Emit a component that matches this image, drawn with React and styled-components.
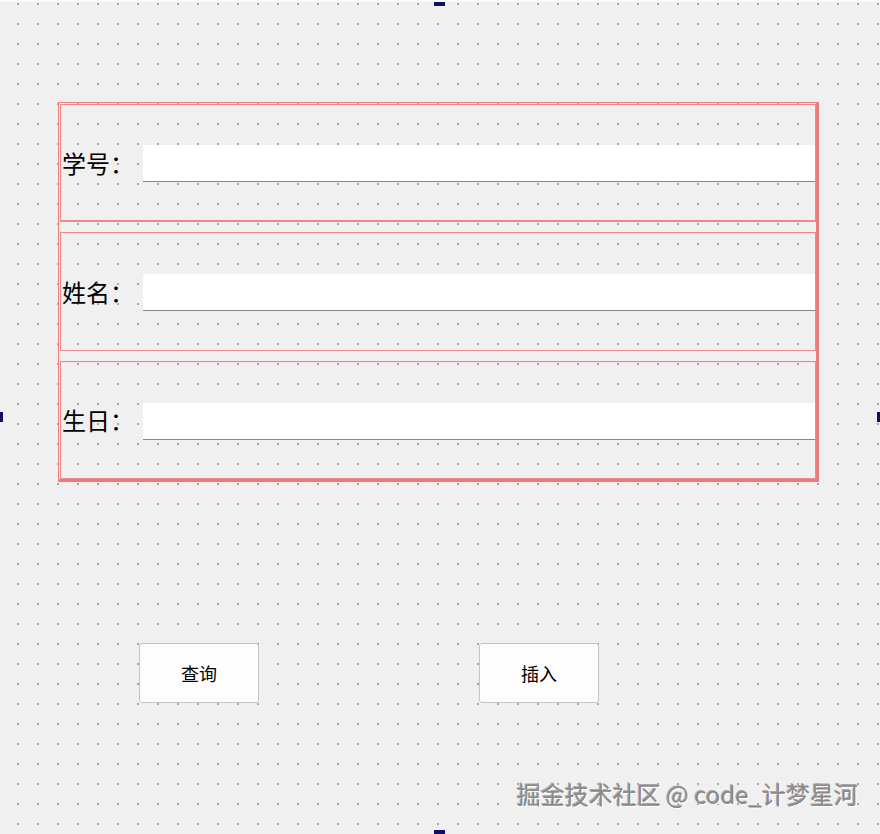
import React from 'react';
import styled, { createGlobalStyle } from 'styled-components';

const GlobalStyle = createGlobalStyle`
  html, body {
    margin: 0;
    padding: 0;
    background: #f0f0f0;
  }
  body {
    font-family: "Noto Sans CJK SC", "Noto Sans", sans-serif;
  }
`;

const Canvas = styled.div`
  position: relative;
  width: 880px;
  height: 834px;
  box-sizing: border-box;
  overflow: hidden;
  background-color: #f0f0f0;
  background-image: conic-gradient(at 2px 2px, transparent 75%, #a9a9a9 0);
  background-size: 20px 20px;
  background-position: 17px 21px;
  border-top: 2px solid #fbfbfb;
  padding-top: 100px;
  display: flex;
  flex-direction: column;
`;

const Handle = styled.div`
  position: absolute;
  background: #10106a;
  width: ${({ $w }) => $w}px;
  height: ${({ $h }) => $h}px;
  ${({ $side }) =>
    ({
      top: 'top: -2px; left: 434px;',
      bottom: 'bottom: 0; left: 434px;',
      left: 'left: 0; top: 410px;',
      right: 'right: 0; top: 410px;',
    }[$side])}
`;

const Frame = styled.div`
  margin-left: 58px;
  width: 761px;
  height: 380px;
  box-sizing: border-box;
  border: 1px solid #ea8080;
  border-right: 3px solid #ec7c7c;
  border-bottom: 3px solid #ec7c7c;
  padding: 1px 0 0 1px;
  display: flex;
  flex-direction: column;
  gap: 10px;
`;

const Group = styled.div`
  height: ${({ $h }) => $h}px;
  box-sizing: border-box;
  border: 1px solid #ea8a8a;
  border-bottom-width: ${({ $thick }) => ($thick ? 2 : 1)}px;
  box-shadow: inset 1px 1px 0 #fbe3e3;
  display: flex;
  align-items: center;
  padding-left: 1px;
`;

const Label = styled.span`
  width: 81px;
  flex: none;
  font-size: 24px;
  line-height: 30px;
  color: #000;
  white-space: nowrap;
`;

const Field = styled.input`
  width: 672px;
  height: 37px;
  margin-top: 2px;
  box-sizing: border-box;
  border: none;
  border-bottom: 1px solid #858585;
  background: #fff;
  outline: none;
  padding: 0 4px;
  font-family: inherit;
  font-size: 16px;
`;

const ButtonRow = styled.div`
  display: flex;
  gap: 220px;
  margin-top: 161px;
  padding-left: 139px;
`;

const Button = styled.button`
  width: 120px;
  height: 60px;
  box-sizing: border-box;
  background: #fdfdfd;
  border: 1px solid #c4c4c4;
  border-radius: 3px;
  font-family: inherit;
  font-size: 18px;
  color: #000;
  padding: 0;
`;

const Watermark = styled.div`
  margin-top: 74px;
  align-self: flex-end;
  margin-right: 22px;
  font-size: 24px;
  line-height: 34px;
  color: #8a8a8a;
  text-shadow: 1px 1px 0 #ffffff, -1px -1px 0 #a8a8a8;
  white-space: nowrap;
`;

const fields = [
  { label: '学号：', h: 118, thick: true },
  { label: '姓名：', h: 119 },
  { label: '生日：', h: 118 },
];

export default function App() {
  return (
    <>
      <GlobalStyle />
      <Canvas>
        <Frame>
          {fields.map((f) => (
            <Group key={f.label} $h={f.h} $thick={f.thick}>
              <Label>{f.label}</Label>
              <Field type="text" />
            </Group>
          ))}
        </Frame>
        <ButtonRow>
          <Button>查询</Button>
          <Button>插入</Button>
        </ButtonRow>
        <Watermark>掘金技术社区 @ code_计梦星河</Watermark>
        <Handle $side="top" $w={11} $h={6} />
        <Handle $side="bottom" $w={11} $h={4} />
        <Handle $side="left" $w={3} $h={10} />
        <Handle $side="right" $w={3} $h={10} />
      </Canvas>
    </>
  );
}
